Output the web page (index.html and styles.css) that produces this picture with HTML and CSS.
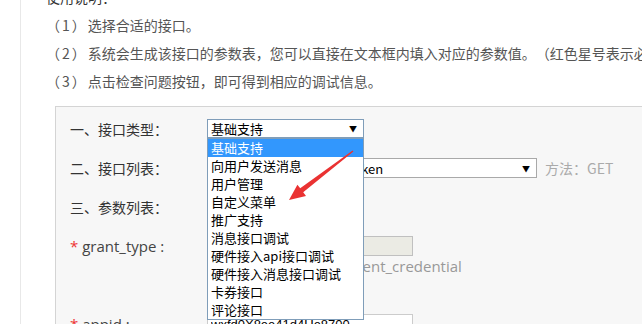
FILE: index.html
```html
<!DOCTYPE html>
<html lang="zh-CN">
<head>
    <meta charset="UTF-8">
    <meta name="viewport" content="width=device-width, initial-scale=1.0">
    <title>接口调试工具</title>
    <link rel="stylesheet" href="styles.css">
</head>
<body>
    <div class="wrap">
        <div class="intro">
            <p class="intro-title">使用说明：</p>
            <p><span class="no">（1）</span>选择合适的接口。</p>
            <p><span class="no">（2）</span>系统会生成该接口的参数表，您可以直接在文本框内填入对应的参数值。（红色星号表示必填）</p>
            <p><span class="no">（3）</span>点击检查问题按钮，即可得到相应的调试信息。</p>
        </div>

        <div class="panel">
            <div class="row row-type">
                <label class="label">一、接口类型：</label>
                <div class="select-wrap">
                    <div class="select focused"><span>基础支持</span><span class="caret">▼</span></div>
                    <ul class="dropdown">
                        <li class="active">基础支持</li>
                        <li>向用户发送消息</li>
                        <li>用户管理</li>
                        <li>自定义菜单</li>
                        <li>推广支持</li>
                        <li>消息接口调试</li>
                        <li>硬件接入api接口调试</li>
                        <li>硬件接入消息接口调试</li>
                        <li>卡券接口</li>
                        <li>评论接口</li>
                    </ul>
                </div>
            </div>
            <div class="row row-list">
                <label class="label">二、接口列表：</label>
                <div class="select wide"><span>基础支持：获取access_token</span><span class="caret">▼</span></div>
                <span class="method">方法：GET</span>
            </div>
            <div class="row row-params">
                <label class="label">三、参数列表：</label>
            </div>
            <div class="row row-field">
                <label class="label param"><em>*</em> grant_type :</label>
                <div class="field">
                    <input type="text" class="input" disabled>
                    <div class="hint">获取access_token 填client_credential</div>
                </div>
            </div>
            <div class="row row-field row-appid">
                <label class="label param"><em>*</em> appid :</label>
                <div class="field">
                    <input type="text" class="input light" value="wxfd0X8ee41d4Ue8700">
                </div>
            </div>

            <!-- 红色箭头标注 -->
            <svg class="mark" width="80" height="60" viewBox="280 146 80 60">
                <polygon points="351.6,149.4 299.2,187.3 296.4,183.7 288,199 305,194.9 302.2,191.3 352.4,150.6" fill="#ea3232"/>
            </svg>
        </div>
    </div>
</body>
</html>
```

FILE: styles.css
```css
html, body { margin: 0; height: 100%; }
body {
    font-family: "Noto Sans CJK SC", "Open Sans", sans-serif;
    background-color: #fff;
    color: #333;
    overflow: hidden;
}
.wrap {
    margin-left: 20px;
    border-left: 1px solid #e8e8e8;
    min-height: 100%;
    padding-left: 25px;
    margin-top: -17px;
}
.intro p {
    margin: 0;
    font-size: 14px;
    line-height: 28px;
    color: #555;
    white-space: nowrap;
    text-spacing-trim: space-all;
}
.intro .intro-title { color: #333; }
.intro .no { letter-spacing: 2px; }

.panel {
    position: relative;
    margin: 11px 0 0 9px;
    width: 720px;
    height: 300px;
    background-color: #f7f7f7;
    border: 1px solid #d4d4d4;
    box-sizing: border-box;
    padding: 12px 0 0 14px;
}
.row { display: flex; align-items: center; }
.label { width: 137px; flex-shrink: 0; font-size: 14px; line-height: 20px; color: #333; }
.label.param { font-family: "Open Sans", sans-serif; font-size: 15px; color: #444; }
.label em { color: #e33; font-style: normal; }

.row-type { height: 19px; }
.row-list { height: 20px; margin-top: 20px; }
.row-params { height: 20px; margin-top: 19px; }
.row-field { align-items: flex-start; margin-top: 19px; }
.row-appid { margin-top: 38px; }

.select-wrap { position: relative; }
.select {
    display: flex;
    justify-content: space-between;
    align-items: center;
    box-sizing: border-box;
    width: 157px;
    height: 19px;
    padding: 0 6px 0 3px;
    background-color: #fff;
    border: 1px solid #a9a9a9;
    font-size: 13px;
    color: #000;
}
.select.focused { border-color: #7f9db9; }
.select.wide { width: 330px; height: 20px; text-spacing-trim: space-all; }
.caret { font-size: 8px; }
.method { margin-left: 8px; font-size: 14px; color: #aaa; }

.dropdown {
    position: absolute;
    top: 19px;
    left: 0;
    z-index: 2;
    width: 157px;
    box-sizing: border-box;
    margin: 0;
    padding: 0;
    list-style: none;
    background-color: #fff;
    border: 1px solid #7f9db9;
    font-size: 13px;
    color: #000;
}
.dropdown li { height: 18px; line-height: 18px; padding-left: 3px; white-space: nowrap; }
.dropdown li.active { background-color: #3297fd; color: #fff; }

.input {
    display: block;
    box-sizing: border-box;
    width: 206px;
    height: 20px;
    margin: 0;
    padding: 0 3px;
    border: 1px solid #c0c0c0;
    background-color: #ebebe4;
    font-size: 13px;
}
.input.light { background-color: #fff; border-color: #ccc; color: #000; }
.hint { font-family: "Open Sans", sans-serif; font-size: 15px; line-height: 20px; color: #999; white-space: nowrap; }

.mark { position: absolute; left: 225px; top: 40px; z-index: 3; }
```
